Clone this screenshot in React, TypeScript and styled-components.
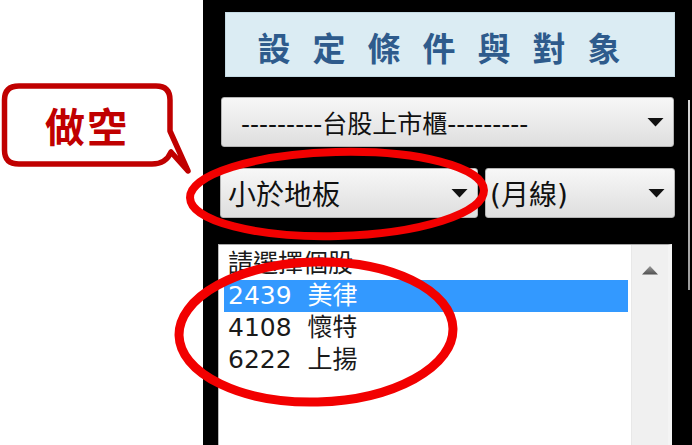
import React from "react";
import styled, { createGlobalStyle } from "styled-components";

const Global = createGlobalStyle`
  html, body { margin: 0; padding: 0; background: #ffffff; overflow: hidden; }
  #root { width: 692px; height: 445px; }
`;

const CJK = `"Noto Sans CJK TC", "Noto Sans CJK SC", sans-serif`;

const Page = styled.div`
  position: relative;
  display: flex;
  width: 692px;
  height: 445px;
  overflow: hidden;
  font-family: ${CJK};
`;

const Gutter = styled.div`
  width: 203px;
  flex: none;
  background: #ffffff;
`;

const Panel = styled.div`
  flex: 1;
  display: flex;
  background: #000000;
`;

const Main = styled.div`
  width: 474px;
  display: flex;
  flex-direction: column;
`;

const Edge = styled.div`
  flex: 1;
  display: flex;
  justify-content: flex-end;
  padding-top: 100px;
`;

const EdgeLine = styled.div`
  width: 2px;
  margin-right: 2px;
  height: 190px;
  background: linear-gradient(#d8d8d8, #9a9a9a);
`;

const TitleBox = styled.div`
  margin: 12px 0 0 22px;
  width: 450px;
  height: 65px;
  box-sizing: border-box;
  padding-top: 5px;
  background: #dbecf3;
  border: 1px solid #c5dbe4;
  display: flex;
  align-items: center;
  justify-content: center;
  color: #2e5b8c;
  font-size: 33px;
  font-weight: 700;
  letter-spacing: 22px;
`;

const Select = styled.div<{ $w: number; $pl: number; $size: number; $ml?: number }>`
  width: ${(p) => p.$w}px;
  margin-left: ${(p) => p.$ml ?? 0}px;
  height: 50px;
  box-sizing: border-box;
  flex: none;
  display: flex;
  align-items: center;
  padding: 0 9px 0 ${(p) => p.$pl}px;
  background: linear-gradient(#f7f7f7 0%, #ececec 45%, #dedede 100%);
  border: 1px solid #b4b4b4;
  border-radius: 3px;
  color: #111111;
  font-family: "DejaVu Sans", ${CJK};
  font-size: ${(p) => p.$size}px;
  white-space: pre;
`;

const SelectText = styled.span`
  flex: 1;
  overflow: hidden;
`;

const Arrow = () => (
  <svg width="17" height="10" viewBox="0 0 17 10">
    <path d="M0.5 1 L16.5 1 L8.5 9.5 Z" fill="#111" />
  </svg>
);

const TopSelect = styled(Select)`
  margin-top: 20px;
`;

const SelectRow = styled.div`
  margin: 21px 0 0 17px;
  display: flex;
  gap: 7px;
`;

const ListBox = styled.div`
  margin: 26px 0 0 15px;
  width: 454px;
  flex: 1;
  box-sizing: border-box;
  display: flex;
  background: #ffffff;
  border-top: 1px solid #a8a8a8;
  border-left: 1px solid #b8b8b8;
  border-right: 4px solid #f4f4f4;
`;

const Items = styled.div`
  flex: 1;
  padding: 3px 3px 0 5px;
  display: flex;
  flex-direction: column;
`;

const Item = styled.div<{ $selected?: boolean }>`
  height: 32px;
  line-height: 32px;
  padding-left: 4px;
  font-family: "DejaVu Sans", ${CJK};
  font-size: 25px;
  white-space: pre;
  color: ${(p) => (p.$selected ? "#ffffff" : "#1a1a1a")};
  background: ${(p) => (p.$selected ? "#3399ff" : "transparent")};
`;

const Header = styled(Item)`
  overflow: hidden;
`;

const ScrollBar = styled.div`
  width: 37px;
  background: #f0f0f0;
  border-left: 1px solid #e8e8e8;
  display: flex;
  justify-content: center;
  padding-top: 20px;
  box-sizing: border-box;
`;

const Overlay = styled.svg`
  position: absolute;
  left: 0;
  top: 0;
  pointer-events: none;
`;

const CalloutText = styled.div`
  position: absolute;
  left: 4px;
  top: 86px;
  width: 166px;
  height: 78px;
  display: flex;
  align-items: center;
  justify-content: center;
  color: #c00000;
  font-size: 40px;
  font-weight: 700;
  letter-spacing: 2px;
`;

export default function App() {
  return (
    <>
      <Global />
      <Page>
        <Gutter />
        <Panel>
          <Main>
            <TitleBox>設定條件與對象</TitleBox>
            <TopSelect $w={453} $pl={19} $size={25} $ml={18}>
              <SelectText>---------台股上市櫃---------</SelectText>
              <Arrow />
            </TopSelect>
            <SelectRow>
              <Select $w={258} $pl={7} $size={28}>
                <SelectText>小於地板</SelectText>
                <Arrow />
              </Select>
              <Select $w={190} $pl={4} $size={28}>
                <SelectText>(月線)</SelectText>
                <Arrow />
              </Select>
            </SelectRow>
            <ListBox>
              <Items>
                <Header>請選擇個股</Header>
                <Item $selected>2439  美律</Item>
                <Item>4108  懷特</Item>
                <Item>6222  上揚</Item>
              </Items>
              <ScrollBar>
                <svg width="18" height="10" viewBox="0 0 18 10">
                  <defs>
                    <linearGradient id="ua" x1="0" y1="0" x2="0" y2="1">
                      <stop offset="0" stopColor="#9a9a9a" />
                      <stop offset="1" stopColor="#505050" />
                    </linearGradient>
                  </defs>
                  <path d="M1 9.5 L9 1 L17 9.5 Z" fill="url(#ua)" />
                </svg>
              </ScrollBar>
            </ListBox>
          </Main>
          <Edge>
            <EdgeLine />
          </Edge>
        </Panel>
        <Overlay width="692" height="445" viewBox="0 0 692 445">
          <path
            d="M19 86 H156 Q170 86 170 100 V131 L188 171 L171 152 Q166 164 152 164 H19 Q4.5 164 4.5 150 V100 Q4.5 86 19 86 Z"
            fill="#ffffff"
            stroke="#c00000"
            strokeWidth="5.5"
            strokeLinejoin="round"
          />
          <ellipse
            cx="337"
            cy="194"
            rx="147"
            ry="42"
            fill="none"
            stroke="#f20000"
            strokeWidth="8"
            transform="rotate(-1.5 337 194)"
          />
          <ellipse
            cx="316"
            cy="332"
            rx="137"
            ry="70"
            fill="none"
            stroke="#f20000"
            strokeWidth="9"
            transform="rotate(-1.5 316 332)"
          />
        </Overlay>
        <CalloutText>做空</CalloutText>
      </Page>
    </>
  );
}
